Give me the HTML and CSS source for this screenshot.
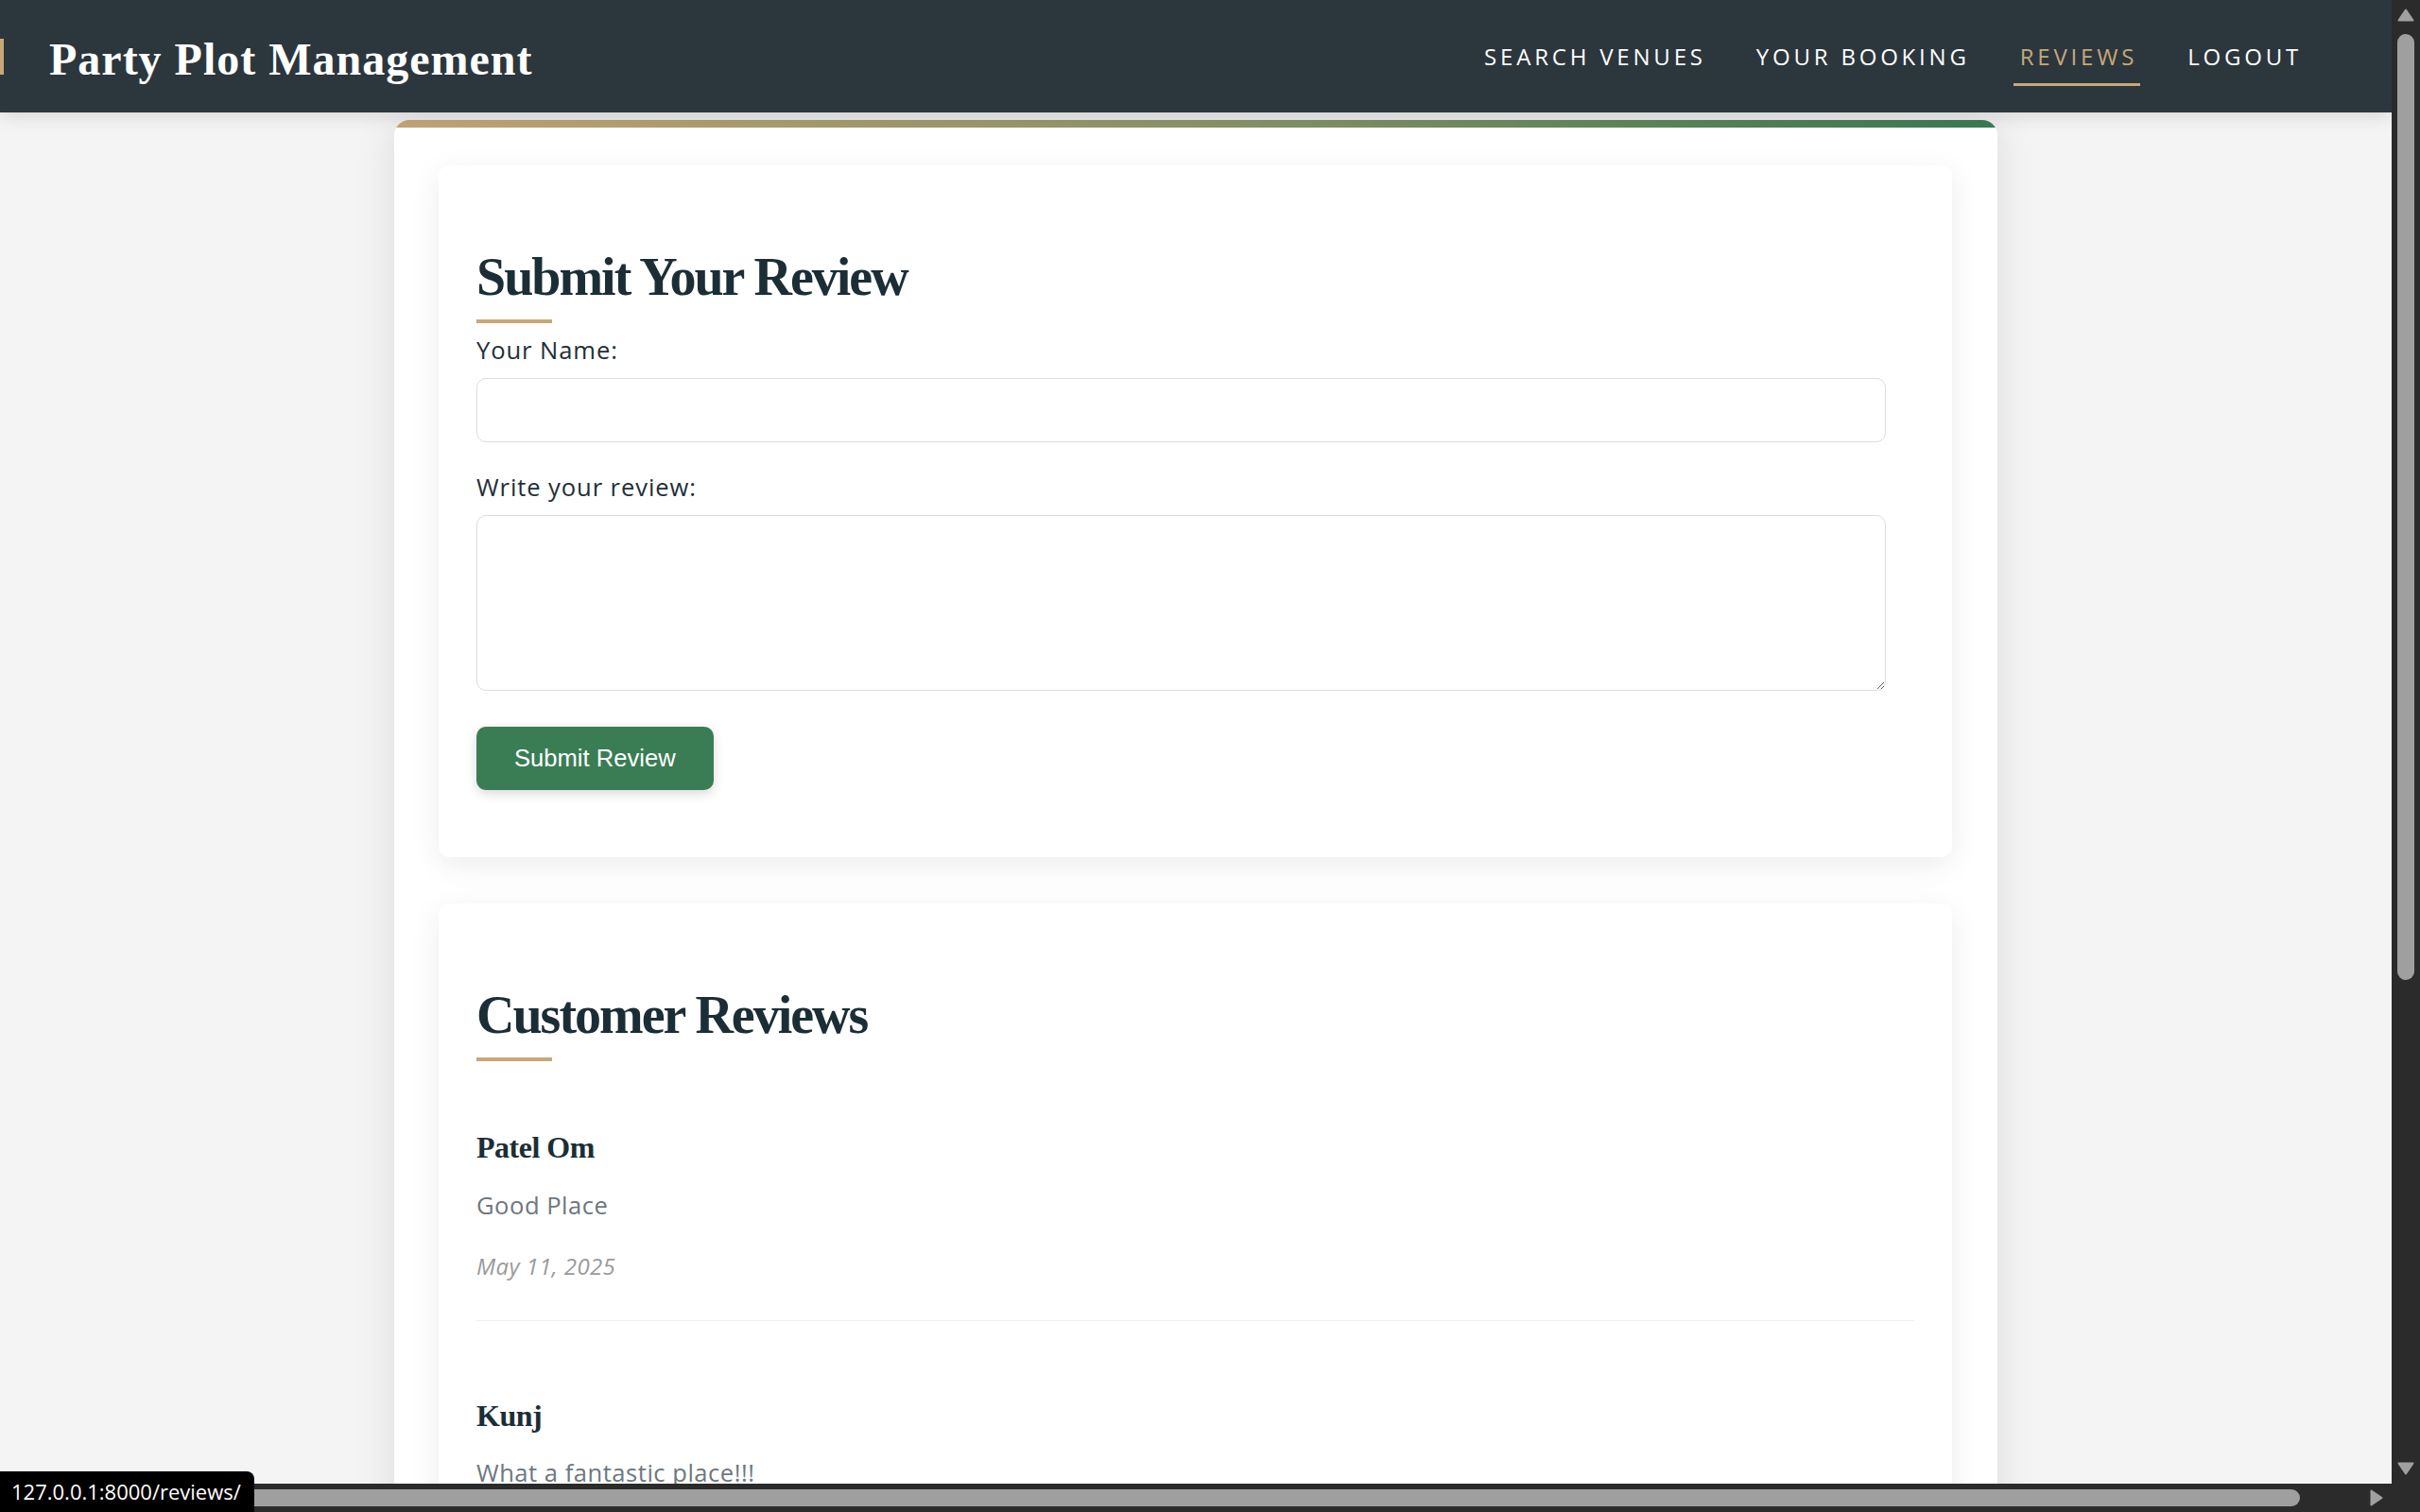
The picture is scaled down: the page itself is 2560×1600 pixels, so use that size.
FILE: index.html
```html
<!DOCTYPE html>
<html lang="en">
<head>
<meta charset="utf-8">
<title>Reviews - Party Plot Management</title>
<link rel="stylesheet" href="styles.css">
</head>
<body>
<div class="window">
  <div class="viewport">
    <header class="navbar">
      <div class="brand">
        <span class="brand-mark"></span>
        <a class="brand-title" href="#">Party Plot Management</a>
      </div>
      <nav class="nav">
        <a class="nav-link" href="#">Search Venues</a>
        <a class="nav-link" href="#">Your Booking</a>
        <a class="nav-link active" href="#">Reviews</a>
        <a class="nav-link" href="#">Logout</a>
      </nav>
    </header>

    <main class="container">
      <div class="container-accent"></div>
      <div class="container-body">
        <section class="card">
          <h2 class="section-title">Submit Your Review</h2>
          <form class="review-form">
            <label class="field-label" for="name">Your Name:</label>
            <input class="field-input" id="name" type="text">
            <label class="field-label" for="review">Write your review:</label>
            <textarea class="field-textarea" id="review"></textarea>
            <button class="btn-submit" type="button">Submit Review</button>
          </form>
        </section>

        <section class="card">
          <h2 class="section-title">Customer Reviews</h2>
          <div class="review-list">
            <article class="review">
              <h3 class="review-name">Patel Om</h3>
              <p class="review-text">Good Place</p>
              <p class="review-date">May 11, 2025</p>
            </article>
            <article class="review">
              <h3 class="review-name">Kunj</h3>
              <p class="review-text">What a fantastic place!!!</p>
              <p class="review-date">May 11, 2025</p>
            </article>
          </div>
        </section>
      </div>
    </main>
  </div>

  <div class="vscroll">
    <svg class="arrow" width="18" height="14" viewBox="0 0 18 14"><polygon points="9,1.5 16.5,12.5 1.5,12.5" /></svg>
    <div class="vthumb"></div>
    <svg class="arrow arrow-end" width="18" height="14" viewBox="0 0 18 14"><polygon points="1.5,1.5 16.5,1.5 9,12.5" /></svg>
  </div>
  <div class="hscroll">
    <svg class="arrow" width="14" height="18" viewBox="0 0 14 18"><polygon points="12.5,1.5 12.5,16.5 1.5,9" /></svg>
    <div class="hthumb"></div>
    <svg class="arrow arrow-end" width="14" height="18" viewBox="0 0 14 18"><polygon points="1.5,1.5 12.5,9 1.5,16.5" /></svg>
  </div>
  <div class="corner"></div>

  <div class="status-bubble">127.0.0.1:8000/reviews/</div>
</div>
</body>
</html>
```

FILE: styles.css
```css
* {
  box-sizing: border-box;
}

html,
body {
  margin: 0;
  height: 100%;
  overflow: hidden;
}

body {
  font-family: "Open Sans", "Noto Sans", sans-serif;
  background: #2b2b2b;
}

.window {
  position: relative;
  width: 2560px;
  height: 1600px;
  display: grid;
  grid-template-columns: 2530px 30px;
  grid-template-rows: 1570px 30px;
}

.viewport {
  overflow: hidden;
  background: #f4f4f4;
}

/* ---------- Navbar ---------- */
.navbar {
  position: relative;
  z-index: 2;
  height: 119px;
  background: #2c363d;
  display: flex;
  align-items: center;
  justify-content: space-between;
  padding-right: 92px;
  box-shadow: 0 4px 18px rgba(0, 0, 0, 0.12);
}

.brand {
  display: flex;
  align-items: center;
}

.brand-mark {
  width: 4px;
  height: 38px;
  background: #c8a878;
}

.brand-title {
  margin-left: 48px;
  padding-top: 6px;
  font-family: "Liberation Serif", "Times New Roman", serif;
  font-weight: 700;
  font-size: 48px;
  line-height: 48px;
  letter-spacing: 1px;
  color: #ffffff;
  text-decoration: none;
}

.nav {
  display: flex;
  gap: 43px;
}

.nav-link {
  display: block;
  padding: 14px 3px 11px 7px;
  border-bottom: 3px solid transparent;
  font-size: 24px;
  font-weight: 500;
  line-height: 34px;
  letter-spacing: 3.8px;
  text-transform: uppercase;
  color: #ffffff;
  text-decoration: none;
}

.nav-link.active {
  color: #c8a878;
  border-bottom-color: #c8a878;
}

/* ---------- Container ---------- */
.container {
  width: 1696px;
  margin: 8px auto 0;
  background: #ffffff;
  border-radius: 16px 16px 0 0;
  overflow: hidden;
  box-shadow: 0 0 44px rgba(0, 0, 0, 0.1);
}

.container-accent {
  height: 8px;
  background: linear-gradient(90deg, #c4a577 0%, #8c9468 50%, #3a7a52 100%);
}

.container-body {
  display: flex;
  flex-direction: column;
  gap: 49px;
  padding: 40px 48px 0 47px;
}

.card {
  background: #ffffff;
  border-radius: 12px;
  padding: 40px;
  box-shadow: 0 8px 32px rgba(0, 0, 0, 0.08);
}

.section-title {
  margin: 45px 0 10px;
  font-family: "Liberation Serif", "Times New Roman", serif;
  font-weight: 700;
  font-size: 56px;
  line-height: 1.2;
  letter-spacing: -2px;
  color: #1b2e36;
}

.section-title::after {
  content: "";
  display: block;
  width: 80px;
  height: 4px;
  margin-top: 11px;
  background: #c8a878;
}

/* ---------- Form ---------- */
.review-form {
  padding-bottom: 31px;
}

.field-label {
  display: block;
  margin-bottom: 10px;
  font-size: 25.6px;
  line-height: 38px;
  letter-spacing: 0.9px;
  color: #1e2f38;
}

.field-input,
.field-textarea {
  display: block;
  width: 98%;
  border: 1px solid #dddddd;
  border-radius: 10px;
  background: #ffffff;
  font-family: inherit;
  font-size: 25.6px;
  padding: 14px 16px;
}

.field-input {
  height: 68px;
  margin-bottom: 29px;
}

.field-textarea {
  height: 186px;
  margin-bottom: 38px;
}

.btn-submit {
  display: block;
  height: 67px;
  padding: 0 40px;
  border: 0;
  border-radius: 10px;
  background: #3a7d55;
  color: #ffffff;
  font-family: "Liberation Sans", Arial, sans-serif;
  font-size: 25.6px;
  box-shadow: 0 4px 12px rgba(0, 0, 0, 0.15);
}

/* ---------- Reviews ---------- */
.review {
  padding: 81px 0 40px;
  border-bottom: 1px solid #eeeeee;
}

.review:first-child {
  padding-top: 62px;
}

.review-name {
  margin: 0;
  font-family: "Liberation Serif", "Times New Roman", serif;
  font-weight: 700;
  font-size: 32px;
  line-height: 38.4px;
  letter-spacing: -0.5px;
  color: #1b2e36;
}

.review-text {
  margin: 23px 0 0;
  font-size: 25.6px;
  line-height: 38.4px;
  letter-spacing: 0.5px;
  color: #6e7780;
}

.review-date {
  margin: 28px 0 0;
  font-size: 24px;
  line-height: 33.6px;
  letter-spacing: 0.4px;
  font-style: italic;
  color: #9a9a9a;
}

/* ---------- Scrollbars (browser chrome) ---------- */
.vscroll {
  background: #2b2b2b;
  display: flex;
  flex-direction: column;
  align-items: center;
  padding: 9px 0;
}

.hscroll {
  background: #2b2b2b;
  display: flex;
  align-items: center;
  padding: 0 9px;
}

.corner {
  background: #2b2b2b;
}

.arrow {
  display: block;
  flex: none;
}

.arrow polygon {
  fill: #a0a0a0;
  stroke: #a0a0a0;
  stroke-width: 2;
  stroke-linejoin: round;
}

.arrow-end {
  margin-top: auto;
}

.hscroll .arrow-end {
  margin-top: 0;
  margin-left: auto;
}

.vthumb {
  width: 18px;
  height: 1001px;
  margin-top: 13px;
  border-radius: 9px;
  background: #9f9f9f;
}

.hthumb {
  height: 18px;
  width: 2399px;
  margin-left: 11px;
  border-radius: 9px;
  background: #9f9f9f;
}

/* ---------- Status bubble ---------- */
.status-bubble {
  position: absolute;
  left: 0;
  bottom: 0;
  height: 43px;
  padding: 0 14px 0 12px;
  border-top-right-radius: 8px;
  background: #000000;
  color: #ffffff;
  font-family: "Open Sans", sans-serif;
  font-size: 22px;
  line-height: 43px;
}
```
